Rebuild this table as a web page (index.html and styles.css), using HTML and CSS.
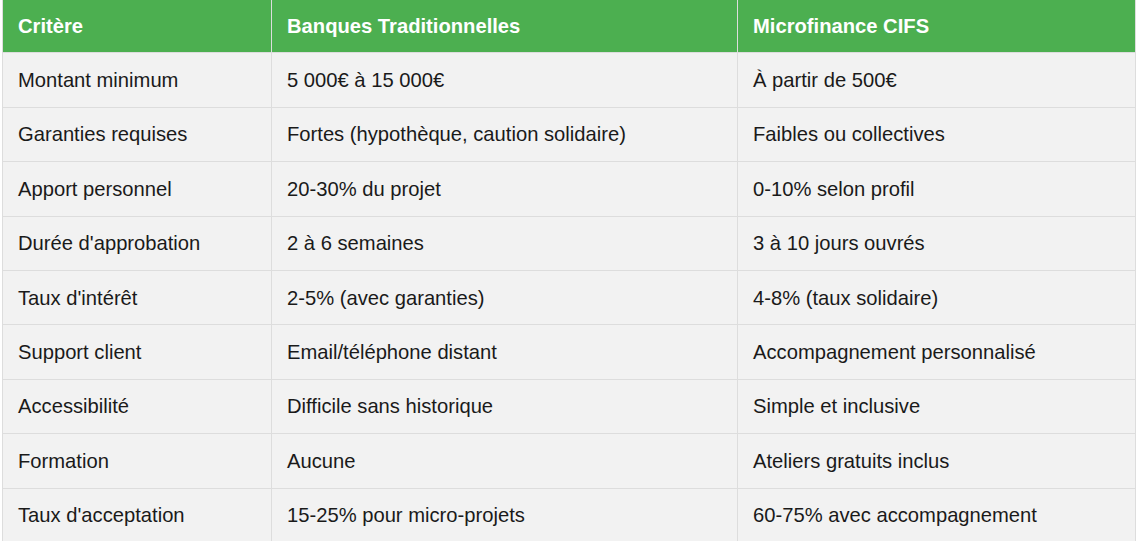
FILE: index.html
```html
<!DOCTYPE html>
<html lang="fr">
<head>
<meta charset="utf-8">
<title>Comparatif</title>
<link rel="stylesheet" href="styles.css">
</head>
<body>
<div class="wrap">
<table class="compare">
<colgroup><col class="c1"><col class="c2"><col class="c3"></colgroup>
<thead>
<tr><th>Critère</th><th>Banques Traditionnelles</th><th>Microfinance CIFS</th></tr>
</thead>
<tbody>
<tr><td>Montant minimum</td><td>5 000€ à 15 000€</td><td>À partir de 500€</td></tr>
<tr><td>Garanties requises</td><td>Fortes (hypothèque, caution solidaire)</td><td>Faibles ou collectives</td></tr>
<tr><td>Apport personnel</td><td>20-30% du projet</td><td>0-10% selon profil</td></tr>
<tr><td>Durée d'approbation</td><td>2 à 6 semaines</td><td>3 à 10 jours ouvrés</td></tr>
<tr><td>Taux d'intérêt</td><td>2-5% (avec garanties)</td><td>4-8% (taux solidaire)</td></tr>
<tr><td>Support client</td><td>Email/téléphone distant</td><td>Accompagnement personnalisé</td></tr>
<tr><td>Accessibilité</td><td>Difficile sans historique</td><td>Simple et inclusive</td></tr>
<tr><td>Formation</td><td>Aucune</td><td>Ateliers gratuits inclus</td></tr>
<tr><td>Taux d'acceptation</td><td>15-25% pour micro-projets</td><td>60-75% avec accompagnement</td></tr>
</tbody>
</table>
</div>
</body>
</html>
```
FILE: styles.css
```css
html, body {
  margin: 0;
  padding: 0;
  background: #ffffff;
}
body {
  font-family: "Liberation Sans", Arial, sans-serif;
  color: #1a1a1a;
}
.wrap {
  padding-left: 2px;
}
.compare {
  border-collapse: collapse;
  table-layout: fixed;
  width: 1133px;
  font-size: 20.2px;
}
.c1 { width: 269px; }
.c2 { width: 466px; }
.c3 { width: 398px; }
.compare th,
.compare td {
  border: 1px solid #dddddd;
  text-align: left;
  padding: 15.5px 15px 14.5px;
  line-height: 23.4px;
  white-space: nowrap;
}
.compare th {
  background: #4caf50;
  color: #ffffff;
  font-weight: bold;
  border-top: none;
  padding-top: 14.5px;
  padding-bottom: 14.5px;
}
.compare td {
  background: #f2f2f2;
}
```
